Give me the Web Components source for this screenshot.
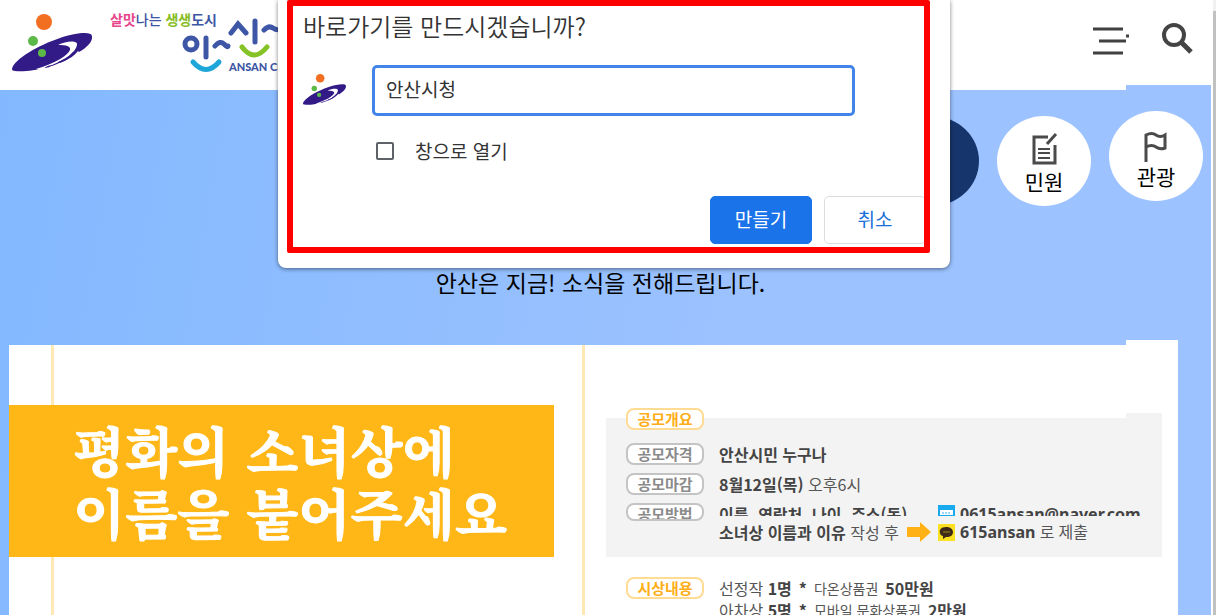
<!DOCTYPE html>
<html lang="ko">
<head>
<meta charset="utf-8">
<meta name="viewport" content="width=device-width, initial-scale=1">
<title>안산시청</title>
<style>
  body {
    margin: 0;
    min-height: 100vh;
    overflow: hidden;
    font-family: "Noto Sans CJK KR", "Noto Sans", sans-serif;
    color: #000;
  }
</style>
</head>
<body>
<city-page>
  <city-header slot="header"></city-header>
  <quick-links slot="main"></quick-links>
  <news-lead slot="main">안산은 지금! 소식을 전해드립니다.</news-lead>
  <event-card slot="main"></event-card>
  <shortcut-dialog slot="dialog" name="안산시청"></shortcut-dialog>
</city-page>

<script>
const define = (name, html, setup) => {
  const template = document.createElement('template');
  template.innerHTML = html;

  customElements.define(name, class extends HTMLElement {
    constructor() {
      super();
      this.attachShadow({mode: 'open'}).appendChild(template.content.cloneNode(true));
    }

    connectedCallback() {
      if (setup) {
        setup(this, this.shadowRoot);
      }
    }
  });
};

/**
 * CityMark
 */
define('city-mark', `
<style>
  :host { display: block; }
  svg { display: block; width: 100%; height: auto; }
</style>
<svg viewBox="0 0 82 60" aria-hidden="true">
  <path fill="#321a87" d="M0 55C2 45 27 31 48 24C64 19 79 17 80 22C81 28 74 34 67 38L66 37C62 42 57 45 52 47C47 49 40 53 33 53C24 57 9 58 3 57C1 57 0 56 0 55Z"/>
  <path fill="#fff" d="M46 31C54 27 66 26 65 31C64 38 54 45 40 51L28 56L24 55C44 49 56 41 58 36C59 32 54 31 46 31Z"/>
  <path fill="#321a87" d="M32 54Q36 51 41 51Q37 54 32 54ZM46 48Q56 45 61 38L62 39Q57 46 48 49Z"/>
  <circle cx="32" cy="8" r="8" fill="#f26f21"/>
  <circle cx="21" cy="27" r="5" fill="#5cb947"/>
  <circle cx="30" cy="39" r="4" fill="#5cb947"/>
</svg>
`);

/**
 * CityHeader
 */
define('city-header', `
<style>
  :host {
    display: flex;
    justify-content: space-between;
    align-items: flex-start;
    height: 90px;
    box-sizing: border-box;
    padding: 14px 18px 0 12px;
    background:
      linear-gradient(#fff, #fff) 0 0 / calc(100% - 85px) 90px no-repeat,
      linear-gradient(#fff, #fff) 100% 0 / 85px 85px no-repeat;
  }
  .brand { display: flex; gap: 16px; }
  city-mark { width: 82px; }
  .word { display: block; overflow: visible; }
  nav { display: flex; gap: 32px; padding-top: 5px; }
  button {
    display: block;
    padding: 0;
    border: 0;
    background: none;
  }
  svg { display: block; }
</style>
<div class="brand">
  <city-mark></city-mark>
  <svg class="word" width="190" height="66" viewBox="110 8 190 66" role="img" aria-label="안산">
    <text x="110" y="19" font-size="14" font-weight="700" fill="#3d55a5"><tspan fill="#e8468c">살맛</tspan><tspan font-weight="500">나는</tspan> <tspan fill="#86bd26">생생</tspan>도시</text>
    <g fill="none" stroke="#3e56a6" stroke-width="5" stroke-linecap="round">
      <circle cx="191" cy="38" r="6"/>
      <path d="M206 32V51M215 40Q220 34 224 38T228 40M231 27L238 18L246 27M255 15V36M264 24Q269 19 273 22T282 23"/>
      <path stroke="#84c225" d="M242 41Q254 57 267 41"/>
      <path stroke="#1ea6d8" d="M193 56Q206 71 219 56"/>
    </g>
    <text x="229" y="65" font-family="Lato, sans-serif" font-size="11" font-weight="900" fill="#3d55a5">ANSAN CITY</text>
  </svg>
</div>
<nav>
  <button aria-label="전체메뉴">
    <svg width="38" height="40" viewBox="0 0 38 40" stroke="#414141" stroke-width="3">
      <path d="M2 10H32M8 22H35M2 34H32M35 17H38"/>
    </svg>
  </button>
  <button aria-label="검색">
    <svg width="32" height="36" viewBox="0 0 32 36" fill="none" stroke="#444">
      <circle cx="13" cy="14" r="10" stroke-width="4"/>
      <path d="M20 21L30 31" stroke-width="5"/>
    </svg>
  </button>
</nav>
`);

/**
 * QuickLink
 */
define('quick-link', `
<style>
  :host { display: block; }
  a {
    display: flex;
    flex-direction: column;
    align-items: center;
    box-sizing: border-box;
    width: 94px;
    height: 90px;
    padding-top: 17px;
    border-radius: 50%;
    background: var(--quick-link-background, #fff);
    color: inherit;
    font-size: 21px;
    line-height: 28px;
    text-decoration: none;
  }
</style>
<a href="#"><slot name="icon"></slot><slot></slot></a>
`);

/**
 * QuickLinks
 */
define('quick-links', `
<style>
  :host {
    display: flex;
    justify-content: flex-end;
    align-items: flex-end;
    gap: 18px;
    height: 95px;
    padding: 21px 8px 0 0;
  }
  .current { --quick-link-background: #17356d; }
  quick-link:last-child { align-self: flex-start; }
  svg { display: block; }
</style>
<quick-link class="current"></quick-link>
<quick-link>
  <svg slot="icon" width="28" height="34" viewBox="0 0 28 34" fill="none" stroke="#4a4a4a" stroke-width="3">
    <path d="M18 4H4V30H25V12"/>
    <path d="M26 1L17 11" />
    <path d="M8 16H20M8 20H20M8 25H20" stroke-width="2"/>
  </svg>
  민원
</quick-link>
<quick-link>
  <svg slot="icon" width="28" height="34" viewBox="0 0 28 34" fill="none" stroke="#4a4a4a" stroke-width="3">
    <path d="M4 34V7Q10 4 14 7T23 7V20Q18 22 14 19T4 19"/>
  </svg>
  관광
</quick-link>
`);

/**
 * NewsLead
 */
define('news-lead', `
<style>
  :host { display: block; padding: 60px 10px 0 0; text-align: center; }
  p { margin: 0; font-size: 23px; line-height: 32px; }
</style>
<p><slot></slot></p>
`);

/**
 * TagLabel
 */
define('tag-label', `
<style>
  :host {
    display: block;
    flex: none;
    box-sizing: border-box;
    width: 78px;
    height: var(--tag-label-height, 22px);
    overflow: hidden;
    border: 2px solid #c4c4c4;
    border-radius: 8px;
    background: #fff;
    color: #8a8a8a;
    font-size: 15px;
    font-weight: 700;
    line-height: 18px;
    text-align: center;
  }
  :host([accent]) { border-color: #ffdb94; color: #ffae17; }
</style>
<slot></slot>
`);

/**
 * EventCard
 */
define('event-card', `
<style>
  :host {
    display: flex;
    margin: 42px 33px 0 9px;
    padding-top: 5px;
    min-height: 360px;
    background:
      linear-gradient(#fff, #fff) 0 5px / 100% 100% no-repeat,
      linear-gradient(#fff, #fff) 100% 0 / 52px 100% no-repeat;
  }
  .poster {
    flex: 0 0 576px;
    box-sizing: border-box;
    padding: 60px 28px 0 0;
    border-right: 3px solid #ffe8b4;
    background: linear-gradient(#ffe8b4, #ffe8b4) 42px 0 / 3px 100% no-repeat;
  }
  h2 {
    margin: 0;
    padding: 14px 0 14px 64px;
    background: #ffb718;
    color: #fff;
    font-family: "Noto Serif CJK KR", "Noto Sans CJK KR", serif;
    font-size: 54px;
    font-weight: 700;
    line-height: 62px;
    white-space: nowrap;
    -webkit-text-stroke: 1px #fff;
  }
  .details {
    flex: 1;
    min-width: 0;
    padding: 68px 16px 0 21px;
    color: #555;
    font-size: 16px;
    line-height: 22px;
    white-space: nowrap;
  }
  .overview {
    padding: 0 0 14px 20px;
    background:
      linear-gradient(#f3f3f3, #f3f3f3) 0 5px / 100% 100% no-repeat,
      linear-gradient(#f3f3f3, #f3f3f3) 100% 0 / 36px 100% no-repeat;
  }
  /* the heading tag straddles the top edge of the box */
  .overview > tag-label { position: relative; top: -5px; }
  .rows { display: flex; flex-direction: column; gap: 8px; padding-top: 8px; }
  .row, .cell, .contact { display: flex; }
  .row { gap: 15px; }
  .cell { width: 219px; gap: 8px; }
  .contact { gap: 5px; font-family: "Noto Sans", "Noto Sans CJK KR", sans-serif; }
  .cut { --tag-label-height: 18px; height: 18px; }
  .cut .cell, .cut .contact { height: 13px; overflow: hidden; }
  .cut .cell { margin-right: -15px; }
  .next { gap: 0; margin-top: -8px; padding-left: 93px; }
  b { color: #444; font-weight: 700; }
  svg { display: block; flex: none; }
  .awards { display: flex; gap: 15px; padding: 20px 0 0 20px; }
  .awards p { margin: 0; display: flex; gap: 7px; }
  small { font-size: 14px; }
</style>
<div class="poster">
  <h2>평화의 소녀상에<br>이름을 붙어주세요</h2>
</div>
<div class="details">
  <div class="overview">
    <tag-label accent>공모개요</tag-label>
    <div class="rows">
      <div class="row"><tag-label>공모자격</tag-label><b>안산시민 누구나</b></div>
      <div class="row"><tag-label>공모마감</tag-label><span><b>8월12일(목)</b> 오후6시</span></div>
      <div class="row cut">
        <tag-label>공모방법</tag-label>
        <div class="cell"><b>이름, 연락처, 나이, 주소(동),</b></div>
        <div class="contact">
          <svg width="17" height="18" viewBox="0 0 17 18"><path fill="#19a9ee" d="M0 2H17V18H0Z"/><path fill="#fff" d="M2 7H15V12H2Z"/><path stroke="#9bd8f7" stroke-width="2" stroke-dasharray="2 1" d="M4 10H13"/></svg>
          <b>0615ansan@naver.com</b>
        </div>
      </div>
      <div class="row next">
        <div class="cell">
          <span><b>소녀상 이름과 이유</b> 작성 후</span>
          <svg width="24" height="22" viewBox="0 0 24 22"><path fill="#ffb115" d="M0 6H13V1L24 11L13 21V16H0Z"/></svg>
        </div>
        <div class="contact">
          <svg width="17" height="22" viewBox="0 0 17 22"><path fill="#fbe122" d="M0 3H17V20H0Z"/><path fill="#3e2a16" d="M8 6C3 6 1 9 2 12C2 14 4 15 5 15L5 18L8 16C13 16 15 14 15 11C15 8 12 6 8 6Z"/><path stroke="#a08a1c" d="M5 11H12"/></svg>
          <span><b>615ansan</b> 로 제출</span>
        </div>
      </div>
    </div>
  </div>
  <div class="awards">
    <tag-label accent>시상내용</tag-label>
    <div>
      <p><span>선정작 <b>1명</b></span><b>*</b><small>다온상품권</small><b>50만원</b></p>
      <p><span>아차상 <b>5명</b></span><b>*</b><small>모바일 문화상품권</small><b>2만원</b></p>
    </div>
  </div>
</div>
`);

/**
 * ShortcutDialog
 */
define('shortcut-dialog', `
<style>
  :host {
    display: block;
    box-sizing: border-box;
    padding: 0 20px 15px 9px;
    border-radius: 0 0 8px 8px;
    background: #fff;
    box-shadow: 0 1px 4px rgba(0, 0, 0, 0.5);
    color: #333;
    font-size: 19px;
  }
  form {
    box-sizing: border-box;
    padding: 0 0 3px 10px;
    border: 6px solid #f00;
    border-radius: 2px;
    overflow: hidden;
  }
  h1 { margin: 0; font-size: 24px; font-weight: 350; line-height: 40px; }
  .field {
    display: flex;
    align-items: center;
    gap: 25px;
    padding: 19px 69px 0 0;
  }
  city-mark { flex: none; width: 44px; }
  input, button { font: inherit; }
  input[type="text"] {
    flex: 1;
    min-width: 0;
    box-sizing: border-box;
    height: 51px;
    padding: 0 11px 4px;
    border: 3px solid #4285e8;
    border-radius: 5px;
    outline: 0;
    background: #fff;
    color: #333;
  }
  .check {
    display: flex;
    align-items: center;
    gap: 21px;
    padding: 20px 0 0 73px;
    line-height: 30px;
  }
  input[type="checkbox"] {
    appearance: none;
    width: 18px;
    height: 18px;
    margin: 0;
    border: 2px solid #5f6368;
    border-radius: 2px;
  }
  .actions {
    display: flex;
    justify-content: flex-end;
    gap: 12px;
    margin-right: -2px;
    padding-top: 30px;
  }
  button {
    box-sizing: border-box;
    width: 102px;
    height: 48px;
    padding: 0 0 4px;
    border: 1px solid #dadce0;
    border-radius: 5px;
    background: #fff;
    color: #1a6fd8;
  }
  button.primary { border-color: #1a73e8; background: #1a73e8; color: #fff; }
</style>
<form>
  <h1>바로가기를 만드시겠습니까?</h1>
  <div class="field">
    <city-mark></city-mark>
    <input type="text" aria-label="바로가기 이름">
  </div>
  <label class="check"><input type="checkbox">창으로 열기</label>
  <div class="actions">
    <button type="button" class="primary">만들기</button>
    <button type="button">취소</button>
  </div>
</form>
`, (host, root) => {
  root.querySelector('input[type="text"]').value = host.getAttribute('name');
});

/**
 * CityPage
 */
define('city-page', `
<style>
  :host { display: flex; position: relative; height: 100vh; overflow: hidden; }
  main { flex: 1; min-width: 0; background: linear-gradient(100deg, #82b8ff, #9cc2ff 60%, #9cc3ff); }
  .scroll {
    flex: 0 0 3px;
    border-left: 2px solid #fff;
    background: linear-gradient(#f1f1f1 11px, #c1c1c1 11px);
  }
  ::slotted(shortcut-dialog) {
    position: absolute;
    top: 0;
    left: 278px;
    width: 672px;
  }
</style>
<main>
  <slot name="header"></slot>
  <slot name="main"></slot>
</main>
<div class="scroll"></div>
<slot name="dialog"></slot>
`);
</script>
</body>
</html>
